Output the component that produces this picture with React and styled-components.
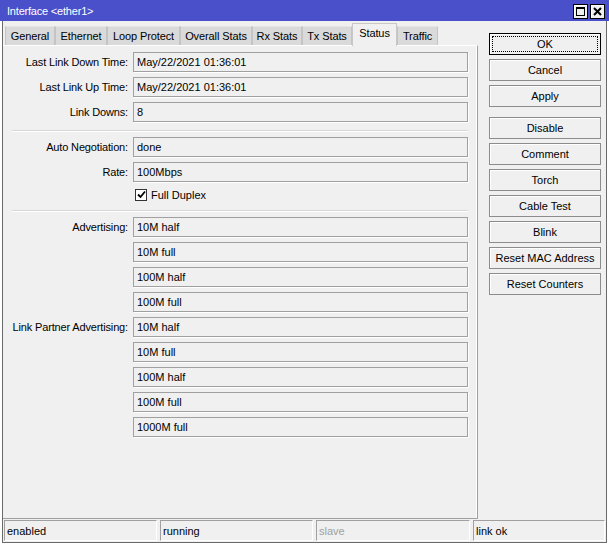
import React from "react";
import styled, { createGlobalStyle } from "styled-components";

const Global = createGlobalStyle`
  html, body { margin: 0; padding: 0; background: #ffffff; }
  body { font-family: "Liberation Sans", Arial, sans-serif; font-size: 11px; color: #000; }
  * { box-sizing: border-box; }
`;

const Window = styled.div`
  width: 609px;
  height: 543px;
  display: flex;
  flex-direction: column;
`;

const TitleBar = styled.div`
  height: 21px;
  background: #4a4fca;
  color: #fff;
  display: flex;
  align-items: center;
  padding: 0 4px 0 7px;
  font-size: 11px;
`;

const TitleText = styled.div`
  flex: 1;
  padding-top: 1px;
  letter-spacing: -0.2px;
`;

const TitleButtons = styled.div`
  display: flex;
  gap: 2px;
  padding-top: 2px;
`;

const TitleButton = styled.div`
  width: 15px;
  height: 15px;
  background: #f0f0f0;
  border: 1px solid #000;
  box-shadow: inset 1px 1px 0 #fff;
  display: flex;
  align-items: center;
  justify-content: center;
`;

const Frame = styled.div`
  flex: 1;
  margin: 0 2px 0 2px;
  background: #f0f0f0;
  border-left: 1px solid #6a6a6a;
  border-right: 1px solid #6a6a6a;
  border-bottom: 1px solid #6a6a6a;
  display: flex;
  flex-direction: column;
`;

const Content = styled.div`
  flex: 1;
  display: flex;
  min-height: 0;
`;

const Main = styled.div`
  width: 475px;
  display: flex;
  flex-direction: column;
`;

const TabStrip = styled.div`
  height: 24px;
  display: flex;
  align-items: flex-end;
  padding-left: 2px;
  position: relative;
  z-index: 1;
`;

const Tab = styled.div`
  width: ${(p) => p.$w}px;
  height: ${(p) => (p.$active ? 23 : 19)}px;
  margin-bottom: ${(p) => (p.$active ? -1 : 0)}px;
  background: ${(p) => (p.$active ? "#f0f0f0" : "#dadada")};
  border: 1px solid ${(p) => (p.$active ? "#c8c8c8" : "#c4c4c4")};
  border-top-color: ${(p) => (p.$active ? "#c8c8c8" : "#e6e6e6")};
  border-bottom: none;
  display: flex;
  align-items: ${(p) => (p.$active ? "flex-start" : "center")};
  padding-top: ${(p) => (p.$active ? 3 : 0)}px;
  justify-content: center;
  white-space: nowrap;
  font-size: 11px;
  letter-spacing: -0.1px;
`;

const Panel = styled.div`
  flex: 1;
  border-top: 1px solid #ffffff;
  border-right: 1px solid #a0a0a0;
  border-bottom: 1px solid #a0a0a0;
  box-shadow: inset -1px 0 0 #ffffff;
  padding: 6px 9px 0 0;
  display: flex;
  flex-direction: column;
`;

const Row = styled.div`
  display: flex;
  align-items: center;
  height: ${(p) => (p.$short ? 15 : 20)}px;
  margin-bottom: 5px;
`;

const Label = styled.div`
  width: 125px;
  text-align: right;
  white-space: nowrap;
  letter-spacing: -0.15px;
`;

const Field = styled.div`
  margin-left: 5px;
  flex: 1;
  height: 20px;
  border: 1px solid #a0a0a0;
  box-shadow: 1px 1px 0 #ffffff;
  display: flex;
  align-items: center;
  padding-left: 3px;
  white-space: nowrap;
`;

const Separator = styled.div`
  margin: 3px 0 6px 9px;
  height: 1px;
  background: #d7d7d7;
  box-shadow: 0 1px 0 #ffffff;
`;

const CheckWrap = styled.label`
  margin-left: 7px;
  display: flex;
  align-items: center;
  gap: 4px;
`;

const CheckBox = styled.div`
  width: 12px;
  height: 12px;
  border: 1px solid #333;
  background: #fff;
  display: flex;
  align-items: center;
  justify-content: center;
`;

const Side = styled.div`
  flex: 1;
  padding: 12px 5px 0 11px;
  display: flex;
  flex-direction: column;
`;

const Button = styled.div`
  height: 22px;
  margin-bottom: ${(p) => (p.$gapAfter ? 10 : 4)}px;
  background: #f0f0f0;
  border: 1px solid ${(p) => (p.$default ? "#000" : "#8c8c8c")};
  box-shadow: inset 1px 1px 0 #ffffff;
  display: flex;
  align-items: center;
  justify-content: center;
  white-space: nowrap;
  font-size: 11px;
  ${(p) => (p.$default ? "outline: 1px dotted #000; outline-offset: -4px;" : "")}
`;

const StatusBar = styled.div`
  height: 23px;
  display: flex;
  padding: 1px;
  gap: 3px;
`;

const StatusCell = styled.div`
  width: ${(p) => p.$w}px;
  flex: ${(p) => (p.$grow ? 1 : "none")};
  border-top: 1px solid #a0a0a0;
  border-left: 1px solid #a0a0a0;
  border-right: 1px solid #ffffff;
  border-bottom: 1px solid #ffffff;
  display: flex;
  align-items: center;
  padding-left: 2px;
  color: ${(p) => (p.$dim ? "#a0a0a0" : "#000")};
`;

const tabs = [
  ["General", 50],
  ["Ethernet", 52],
  ["Loop Protect", 73],
  ["Overall Stats", 72],
  ["Rx Stats", 50],
  ["Tx Stats", 50],
  ["Status", 45],
  ["Traffic", 41],
];

const buttons = [
  { t: "OK", def: true },
  { t: "Cancel" },
  { t: "Apply", gap: true },
  { t: "Disable" },
  { t: "Comment" },
  { t: "Torch" },
  { t: "Cable Test" },
  { t: "Blink" },
  { t: "Reset MAC Address" },
  { t: "Reset Counters" },
];

const advertising = ["10M half", "10M full", "100M half", "100M full"];
const partner = ["10M half", "10M full", "100M half", "100M full", "1000M full"];

function LabeledList({ label, items }) {
  return items.map((v, i) => (
    <Row key={label + i}>
      <Label>{i === 0 ? label : ""}</Label>
      <Field>{v}</Field>
    </Row>
  ));
}

export default function App() {
  return (
    <>
      <Global />
      <Window>
        <TitleBar>
          <TitleText>Interface &lt;ether1&gt;</TitleText>
          <TitleButtons>
            <TitleButton>
              <svg width="11" height="11" viewBox="0 0 11 11">
                <rect x="1.5" y="1.5" width="8" height="8" fill="none" stroke="#000" strokeWidth="1" />
                <rect x="1" y="1" width="9" height="2" fill="#000" />
              </svg>
            </TitleButton>
            <TitleButton>
              <svg width="11" height="11" viewBox="0 0 11 11">
                <path d="M2 2 L9 9 M9 2 L2 9" stroke="#000" strokeWidth="2" />
              </svg>
            </TitleButton>
          </TitleButtons>
        </TitleBar>
        <Frame>
          <Content>
            <Main>
              <TabStrip>
                {tabs.map(([t, w]) => (
                  <Tab key={t} $w={w} $active={t === "Status"}>
                    {t}
                  </Tab>
                ))}
              </TabStrip>
              <Panel>
                <Row>
                  <Label>Last Link Down Time:</Label>
                  <Field>May/22/2021 01:36:01</Field>
                </Row>
                <Row>
                  <Label>Last Link Up Time:</Label>
                  <Field>May/22/2021 01:36:01</Field>
                </Row>
                <Row>
                  <Label>Link Downs:</Label>
                  <Field>8</Field>
                </Row>
                <Separator />
                <Row>
                  <Label>Auto Negotiation:</Label>
                  <Field>done</Field>
                </Row>
                <Row>
                  <Label>Rate:</Label>
                  <Field>100Mbps</Field>
                </Row>
                <Row $short>
                  <Label />
                  <CheckWrap>
                    <CheckBox>
                      <svg width="9" height="9" viewBox="0 0 9 9">
                        <path d="M1 4.5 L3.5 7 L8 1.5" fill="none" stroke="#000" strokeWidth="1.8" />
                      </svg>
                    </CheckBox>
                    Full Duplex
                  </CheckWrap>
                </Row>
                <Separator />
                <LabeledList label="Advertising:" items={advertising} />
                <LabeledList label="Link Partner Advertising:" items={partner} />
              </Panel>
            </Main>
            <Side>
              {buttons.map((b) => (
                <Button key={b.t} $default={b.def} $gapAfter={b.gap}>
                  {b.t}
                </Button>
              ))}
            </Side>
          </Content>
          <StatusBar>
            <StatusCell $w={153}>enabled</StatusCell>
            <StatusCell $w={153}>running</StatusCell>
            <StatusCell $w={154} $dim>slave</StatusCell>
            <StatusCell $grow>link ok</StatusCell>
          </StatusBar>
        </Frame>
      </Window>
    </>
  );
}
